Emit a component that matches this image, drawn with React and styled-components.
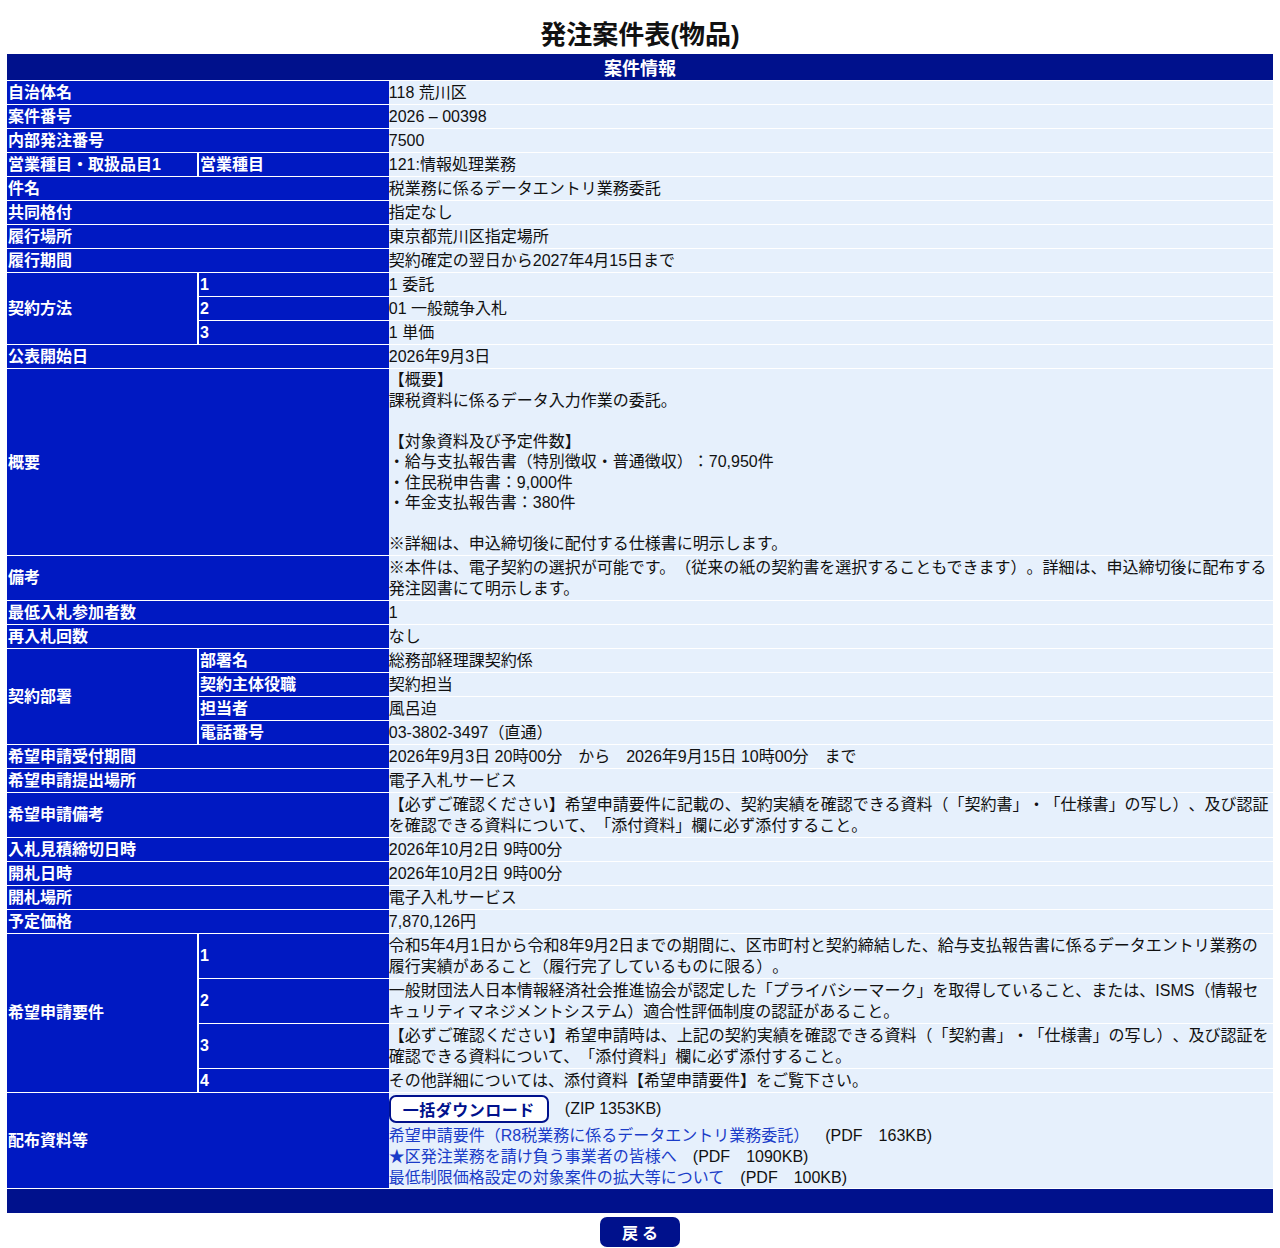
import styled, { createGlobalStyle } from "styled-components";

const GlobalStyle = createGlobalStyle`
  body {
    margin: 0;
    background: #ffffff;
    font-family: "Liberation Sans", "Noto Sans CJK JP", sans-serif;
    color: #111111;
    text-spacing-trim: space-all;
  }
`;

const Page = styled.div`
  padding: 0 7px 2px;
`;

const Title = styled.h1`
  margin: 0;
  padding-top: 17px;
  height: 37px;
  font-size: 26px;
  line-height: 36px;
  font-weight: bold;
  text-align: center;
  color: #111111;
`;

const Table = styled.table`
  width: 100%;
  table-layout: fixed;
  border-collapse: separate;
  border-spacing: 0 1px;
  margin-top: -1px;
  font-size: 16px;
`;

const HeadCell = styled.th`
  background: #00118c;
  color: #ffffff;
  font-size: 18px;
  font-weight: bold;
  height: 26px;
  padding: 0;
  text-align: center;
`;

const Label = styled.td`
  box-sizing: border-box;
  height: 23px;
  padding: 1px 1px 0;
  background: #0019c2;
  color: #ffffff;
  font-weight: bold;
  line-height: 21.5px;
  vertical-align: middle;
  border-left: ${(p) => (p.$sub ? "2px solid #ffffff" : "none")};
`;

const Value = styled.td`
  box-sizing: border-box;
  height: 23px;
  padding: 1px 2px 0 0;
  background: #e6f0fc;
  line-height: ${(p) => p.$lh || "21.5px"};
  vertical-align: middle;
  border-left: 2px solid #0019c2;
  white-space: pre-wrap;
`;

const FootCell = styled.td`
  background: #00118c;
  height: 24px;
  padding: 0;
`;

const DownloadLine = styled.div`
  display: flex;
  align-items: center;
  gap: 16px;
  padding: 1px 0 2px;
`;

const DownloadButton = styled.button`
  font-family: inherit;
  font-size: 16px;
  font-weight: bold;
  color: #00118c;
  background: #ffffff;
  border: 2px solid #00118c;
  border-radius: 7px;
  height: 28px;
  padding: 0 12px;
  letter-spacing: 0.5px;
`;

const FileLine = styled.div`
  line-height: 21px;
`;

const FileLink = styled.a`
  color: #1a3cc8;
  text-decoration: none;
`;

const BackRow = styled.div`
  display: flex;
  justify-content: center;
  padding-top: 3px;
`;

const BackButton = styled.button`
  font-family: inherit;
  width: 80px;
  height: 30px;
  border: none;
  border-radius: 7px;
  background: #00118c;
  color: #ffffff;
  font-size: 16px;
  font-weight: bold;
  letter-spacing: 4px;
  padding: 0 0 0 4px;
`;

const simple = [
  ["自治体名", "118 荒川区"],
  ["案件番号", "2026 – 00398"],
  ["内部発注番号", "7500"],
];

const overview =
  "【概要】\n課税資料に係るデータ入力作業の委託。\n\n【対象資料及び予定件数】\n・給与支払報告書（特別徴収・普通徴収）：70,950件\n・住民税申告書：9,000件\n・年金支払報告書：380件\n\n※詳細は、申込締切後に配付する仕様書に明示します。";

const requirements = [
  "令和5年4月1日から令和8年9月2日までの期間に、区市町村と契約締結した、給与支払報告書に係るデータエントリ業務の履行実績があること（履行完了しているものに限る）。",
  "一般財団法人日本情報経済社会推進協会が認定した「プライバシーマーク」を取得していること、または、ISMS（情報セキュリティマネジメントシステム）適合性評価制度の認証があること。",
  "【必ずご確認ください】希望申請時は、上記の契約実績を確認できる資料（「契約書」・「仕様書」の写し）、及び認証を確認できる資料について、「添付資料」欄に必ず添付すること。",
  "その他詳細については、添付資料【希望申請要件】をご覧下さい。",
];

const files = [
  ["希望申請要件（R8税業務に係るデータエントリ業務委託）", "(PDF　163KB)"],
  ["★区発注業務を請け負う事業者の皆様へ", "(PDF　1090KB)"],
  ["最低制限価格設定の対象案件の拡大等について", "(PDF　100KB)"],
];

function Row({ label, lh, children }) {
  return (
    <tr>
      <Label colSpan={2}>{label}</Label>
      <Value $lh={lh}>{children}</Value>
    </tr>
  );
}

function Group({ label, items }) {
  return items.map(([sub, val], i) => (
    <tr key={i}>
      {i === 0 && <Label rowSpan={items.length}>{label}</Label>}
      <Label $sub>{sub}</Label>
      <Value>{val}</Value>
    </tr>
  ));
}

export default function App() {
  return (
    <Page>
      <GlobalStyle />
      <Title>発注案件表(物品)</Title>
      <Table>
        <colgroup>
          <col style={{ width: "15%" }} />
          <col style={{ width: "15%" }} />
          <col style={{ width: "70%" }} />
        </colgroup>
        <tbody>
          <tr>
            <HeadCell colSpan={3}>案件情報</HeadCell>
          </tr>
          {simple.map(([l, v]) => (
            <Row key={l} label={l}>{v}</Row>
          ))}
          <tr>
            <Label>営業種目・取扱品目1</Label>
            <Label $sub>営業種目</Label>
            <Value>121:情報処理業務</Value>
          </tr>
          <Row label="件名">税業務に係るデータエントリ業務委託</Row>
          <Row label="共同格付">指定なし</Row>
          <Row label="履行場所">東京都荒川区指定場所</Row>
          <Row label="履行期間">契約確定の翌日から2027年4月15日まで</Row>
          <Group
            label="契約方法"
            items={[
              ["1", "1 委託"],
              ["2", "01 一般競争入札"],
              ["3", "1 単価"],
            ]}
          />
          <Row label="公表開始日">2026年9月3日</Row>
          <Row label="概要" lh="20.5px">{overview}</Row>
          <Row label="備考">
            ※本件は、電子契約の選択が可能です。（従来の紙の契約書を選択することもできます）。詳細は、申込締切後に配布する発注図書にて明示します。
          </Row>
          <Row label="最低入札参加者数">1</Row>
          <Row label="再入札回数">なし</Row>
          <Group
            label="契約部署"
            items={[
              ["部署名", "総務部経理課契約係"],
              ["契約主体役職", "契約担当"],
              ["担当者", "風呂迫"],
              ["電話番号", "03-3802-3497（直通）"],
            ]}
          />
          <Row label="希望申請受付期間">
            2026年9月3日 20時00分　から　2026年9月15日 10時00分　まで
          </Row>
          <Row label="希望申請提出場所">電子入札サービス</Row>
          <Row label="希望申請備考">
            【必ずご確認ください】希望申請要件に記載の、契約実績を確認できる資料（「契約書」・「仕様書」の写し）、及び認証を確認できる資料について、「添付資料」欄に必ず添付すること。
          </Row>
          <Row label="入札見積締切日時">2026年10月2日 9時00分</Row>
          <Row label="開札日時">2026年10月2日 9時00分</Row>
          <Row label="開札場所">電子入札サービス</Row>
          <Row label="予定価格">7,870,126円</Row>
          <Group
            label="希望申請要件"
            items={requirements.map((r, i) => [String(i + 1), r])}
          />
          <Row label="配布資料等">
            <DownloadLine>
              <DownloadButton type="button">一括ダウンロード</DownloadButton>
              <span>(ZIP 1353KB)</span>
            </DownloadLine>
            {files.map(([name, size]) => (
              <FileLine key={name}>
                <FileLink href="#">{name}</FileLink>
                {"　"}
                {size}
              </FileLine>
            ))}
          </Row>
          <tr>
            <FootCell colSpan={3} />
          </tr>
        </tbody>
      </Table>
      <BackRow>
        <BackButton type="button">戻る</BackButton>
      </BackRow>
    </Page>
  );
}
